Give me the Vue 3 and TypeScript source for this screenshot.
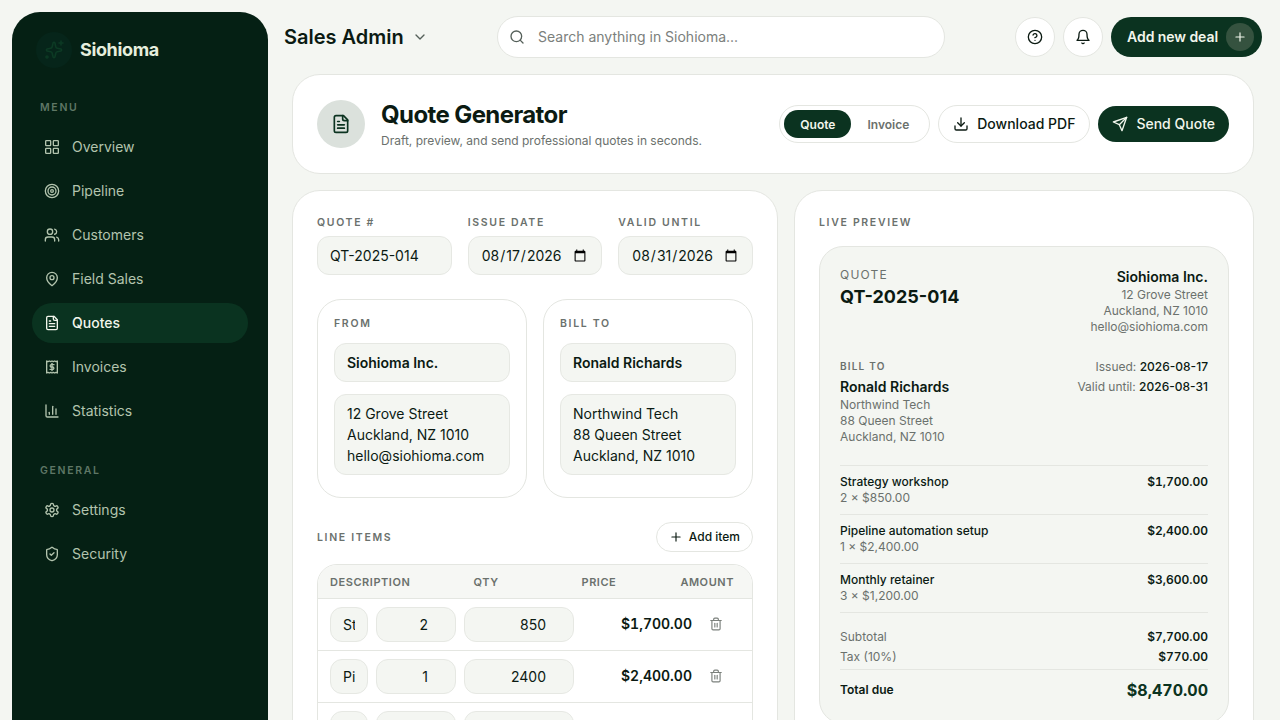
<script setup lang="ts">
import { computed, ref } from 'vue';

interface NavItem {
  label: string;
  paths: string[];
  active?: boolean;
}

interface LineItem {
  description: string;
  qty: number;
  price: number;
}

const menu: NavItem[] = [
  {
    label: 'Overview',
    paths: [
      'M3.5 2.5h5.5a1 1 0 0 1 1 1V9a1 1 0 0 1-1 1H3.5a1 1 0 0 1-1-1V3.5a1 1 0 0 1 1-1z',
      'M15 2.5h5.5a1 1 0 0 1 1 1V9a1 1 0 0 1-1 1H15a1 1 0 0 1-1-1V3.5a1 1 0 0 1 1-1z',
      'M15 14h5.5a1 1 0 0 1 1 1v5.5a1 1 0 0 1-1 1H15a1 1 0 0 1-1-1V15a1 1 0 0 1 1-1z',
      'M3.5 14h5.5a1 1 0 0 1 1 1v5.5a1 1 0 0 1-1 1H3.5a1 1 0 0 1-1-1V15a1 1 0 0 1 1-1z',
    ],
  },
  {
    label: 'Pipeline',
    paths: [
      'M2 12a10 10 0 1 0 20 0a10 10 0 1 0-20 0',
      'M6 12a6 6 0 1 0 12 0a6 6 0 1 0-12 0',
      'M10 12a2 2 0 1 0 4 0a2 2 0 1 0-4 0',
    ],
  },
  {
    label: 'Customers',
    paths: [
      'M16 21v-2a4 4 0 0 0-4-4H6a4 4 0 0 0-4 4v2',
      'M5 7a4 4 0 1 0 8 0a4 4 0 1 0-8 0',
      'M22 21v-2a4 4 0 0 0-3-3.87',
      'M16 3.13a4 4 0 0 1 0 7.75',
    ],
  },
  {
    label: 'Field Sales',
    paths: [
      'M20 10c0 6-8 12-8 12s-8-6-8-12a8 8 0 0 1 16 0Z',
      'M9 10a3 3 0 1 0 6 0a3 3 0 1 0-6 0',
    ],
  },
  {
    label: 'Quotes',
    active: true,
    paths: [
      'M15 2H6a2 2 0 0 0-2 2v16a2 2 0 0 0 2 2h12a2 2 0 0 0 2-2V7Z',
      'M14 2v4a2 2 0 0 0 2 2h4',
      'M10 9H8',
      'M16 13H8',
      'M16 17H8',
    ],
  },
  {
    label: 'Invoices',
    paths: [
      'M4 3l2 1 2-1 2 1 2-1 2 1 2-1 2 1 2-1v18l-2-1-2 1-2-1-2 1-2-1-2 1-2-1-2 1z',
      'M15 8.5h-4a1.75 1.75 0 0 0 0 3.5h2a1.75 1.75 0 0 1 0 3.5H9',
      'M12 6.5v11',
    ],
  },
  {
    label: 'Statistics',
    paths: ['M3 3v16a2 2 0 0 0 2 2h16', 'M18 17V9', 'M13 17V5', 'M8 17v-3'],
  },
];

const general: NavItem[] = [
  {
    label: 'Settings',
    paths: [
      'M12.22 2h-.44a2 2 0 0 0-2 2v.18a2 2 0 0 1-1 1.73l-.43.25a2 2 0 0 1-2 0l-.15-.08a2 2 0 0 0-2.73.73l-.22.38a2 2 0 0 0 .73 2.73l.15.1a2 2 0 0 1 1 1.72v.51a2 2 0 0 1-1 1.74l-.15.09a2 2 0 0 0-.73 2.73l.22.38a2 2 0 0 0 2.73.73l.15-.08a2 2 0 0 1 2 0l.43.25a2 2 0 0 1 1 1.73V20a2 2 0 0 0 2 2h.44a2 2 0 0 0 2-2v-.18a2 2 0 0 1 1-1.73l.43-.25a2 2 0 0 1 2 0l.15.08a2 2 0 0 0 2.73-.73l.22-.39a2 2 0 0 0-.73-2.73l-.15-.08a2 2 0 0 1-1-1.74v-.5a2 2 0 0 1 1-1.74l.15-.09a2 2 0 0 0 .73-2.73l-.22-.38a2 2 0 0 0-2.73-.73l-.15.08a2 2 0 0 1-2 0l-.43-.25a2 2 0 0 1-1-1.73V4a2 2 0 0 0-2-2z',
      'M9 12a3 3 0 1 0 6 0a3 3 0 1 0-6 0',
    ],
  },
  {
    label: 'Security',
    paths: [
      'M20 13c0 5-3.5 7.5-7.66 8.95a1 1 0 0 1-.67-.01C7.5 20.5 4 18 4 13V6a1 1 0 0 1 1-1c2 0 4.5-1.2 6.24-2.72a1.17 1.17 0 0 1 1.52 0C14.51 3.81 17 5 19 5a1 1 0 0 1 1 1z',
      'm9 12 2 2 4-4',
    ],
  },
];

const quoteNo = ref('QT-2025-014');
const issueDate = ref('2026-08-17');
const validUntil = ref('2026-08-31');
const fromName = ref('Siohioma Inc.');
const fromAddress = ref('12 Grove Street\nAuckland, NZ 1010\nhello@siohioma.com');
const billName = ref('Ronald Richards');
const billAddress = ref('Northwind Tech\n88 Queen Street\nAuckland, NZ 1010');

const items = ref<LineItem[]>([
  { description: 'Strategy workshop', qty: 2, price: 850 },
  { description: 'Pipeline automation setup', qty: 1, price: 2400 },
  { description: 'Monthly retainer', qty: 3, price: 1200 },
]);

const money = (n: number) =>
  '$' + n.toLocaleString('en-US', { minimumFractionDigits: 2, maximumFractionDigits: 2 });

const subtotal = computed(() => items.value.reduce((sum, i) => sum + i.qty * i.price, 0));
const tax = computed(() => subtotal.value * 0.1);
</script>

<template>
  <div class="app">
    <aside class="sidebar">
      <div class="brand">
        <span class="brand-logo">
          <svg viewBox="0 0 24 24" fill="none" stroke="currentColor" stroke-width="1.6" stroke-linecap="round" stroke-linejoin="round">
            <path d="M11.02 5.2a1 1 0 0 1 1.96 0l.8 3.6a2 2 0 0 0 1.5 1.5l3.5.75a1 1 0 0 1 0 1.95l-3.5.8a2 2 0 0 0-1.5 1.5l-.8 3.5a1 1 0 0 1-1.96 0l-.8-3.5a2 2 0 0 0-1.5-1.5l-3.5-.8a1 1 0 0 1 0-1.95l3.5-.75a2 2 0 0 0 1.5-1.5z" />
            <path d="M19 3v4" />
            <path d="M21 5h-4" />
            <path d="M4 19a1 1 0 1 0 2 0a1 1 0 1 0-2 0" />
          </svg>
        </span>
        <span class="brand-name">Siohioma</span>
      </div>

      <div class="nav-label">MENU</div>
      <nav class="nav">
        <a v-for="item in menu" :key="item.label" :class="['nav-item', { active: item.active }]">
          <svg viewBox="0 0 24 24" fill="none" stroke="currentColor" stroke-width="2" stroke-linecap="round" stroke-linejoin="round">
            <path v-for="d in item.paths" :key="d" :d="d" />
          </svg>
          {{ item.label }}
        </a>
      </nav>

      <div class="nav-label general">GENERAL</div>
      <nav class="nav">
        <a v-for="item in general" :key="item.label" class="nav-item">
          <svg viewBox="0 0 24 24" fill="none" stroke="currentColor" stroke-width="2" stroke-linecap="round" stroke-linejoin="round">
            <path v-for="d in item.paths" :key="d" :d="d" />
          </svg>
          {{ item.label }}
        </a>
      </nav>
    </aside>

    <div class="main">
      <header class="topbar">
        <div class="workspace">
          <span>Sales Admin</span>
          <svg viewBox="0 0 24 24" fill="none" stroke="currentColor" stroke-width="2" stroke-linecap="round" stroke-linejoin="round">
            <path d="m6 9 6 6 6-6" />
          </svg>
        </div>
        <label class="search">
          <svg viewBox="0 0 24 24" fill="none" stroke="currentColor" stroke-width="2" stroke-linecap="round" stroke-linejoin="round">
            <circle cx="11" cy="11" r="8" />
            <path d="m21 21-4.3-4.3" />
          </svg>
          <input type="text" placeholder="Search anything in Siohioma..." />
        </label>
        <div class="top-actions">
          <button class="round-btn" type="button" title="Help">
            <svg viewBox="0 0 24 24" fill="none" stroke="currentColor" stroke-width="2" stroke-linecap="round" stroke-linejoin="round">
              <circle cx="12" cy="12" r="10" />
              <path d="M9.09 9a3 3 0 0 1 5.83 1c0 2-3 3-3 3" />
              <path d="M12 17h.01" />
            </svg>
          </button>
          <button class="round-btn" type="button" title="Notifications">
            <svg viewBox="0 0 24 24" fill="none" stroke="currentColor" stroke-width="2" stroke-linecap="round" stroke-linejoin="round">
              <path d="M6 8a6 6 0 0 1 12 0c0 7 3 9 3 9H3s3-2 3-9" />
              <path d="M10.3 21a1.94 1.94 0 0 0 3.4 0" />
            </svg>
          </button>
          <button class="add-deal" type="button">
            Add new deal
            <span class="add-deal-icon">
              <svg viewBox="0 0 24 24" fill="none" stroke="currentColor" stroke-width="2" stroke-linecap="round" stroke-linejoin="round">
                <path d="M5 12h14" />
                <path d="M12 5v14" />
              </svg>
            </span>
          </button>
        </div>
      </header>

      <section class="card page-head">
        <div class="head-icon">
          <svg viewBox="0 0 24 24" fill="none" stroke="currentColor" stroke-width="2" stroke-linecap="round" stroke-linejoin="round">
            <path d="M15 2H6a2 2 0 0 0-2 2v16a2 2 0 0 0 2 2h12a2 2 0 0 0 2-2V7Z" />
            <path d="M14 2v4a2 2 0 0 0 2 2h4" />
            <path d="M10 9H8" />
            <path d="M16 13H8" />
            <path d="M16 17H8" />
          </svg>
        </div>
        <div class="head-text">
          <h1>Quote Generator</h1>
          <p>Draft, preview, and send professional quotes in seconds.</p>
        </div>
        <div class="head-actions">
          <div class="toggle">
            <span class="toggle-on">Quote</span>
            <span class="toggle-off">Invoice</span>
          </div>
          <button class="outline-btn" type="button">
            <svg viewBox="0 0 24 24" fill="none" stroke="currentColor" stroke-width="2" stroke-linecap="round" stroke-linejoin="round">
              <path d="M21 15v4a2 2 0 0 1-2 2H5a2 2 0 0 1-2-2v-4" />
              <path d="m7 10 5 5 5-5" />
              <path d="M12 15V3" />
            </svg>
            Download PDF
          </button>
          <button class="send-btn" type="button">
            <svg viewBox="0 0 24 24" fill="none" stroke="currentColor" stroke-width="2" stroke-linecap="round" stroke-linejoin="round">
              <path d="m22 2-7 20-4-9-9-4Z" />
              <path d="M22 2 11 13" />
            </svg>
            Send Quote
          </button>
        </div>
      </section>

      <div class="columns">
        <section class="card form-panel">
          <div class="meta-grid">
            <label class="field">
              <span class="caps">QUOTE #</span>
              <input v-model="quoteNo" type="text" class="input" />
            </label>
            <label class="field">
              <span class="caps">ISSUE DATE</span>
              <input v-model="issueDate" type="date" class="input" />
            </label>
            <label class="field">
              <span class="caps">VALID UNTIL</span>
              <input v-model="validUntil" type="date" class="input" />
            </label>
          </div>

          <div class="party-grid">
            <div class="party">
              <span class="caps">FROM</span>
              <input v-model="fromName" type="text" class="input strong" />
              <textarea v-model="fromAddress" rows="3" class="input area"></textarea>
            </div>
            <div class="party">
              <span class="caps">BILL TO</span>
              <input v-model="billName" type="text" class="input strong" />
              <textarea v-model="billAddress" rows="3" class="input area"></textarea>
            </div>
          </div>

          <div class="items-head">
            <span class="caps">LINE ITEMS</span>
            <button class="add-item" type="button">
              <svg viewBox="0 0 24 24" fill="none" stroke="currentColor" stroke-width="2" stroke-linecap="round" stroke-linejoin="round">
                <path d="M5 12h14" />
                <path d="M12 5v14" />
              </svg>
              Add item
            </button>
          </div>

          <div class="items-table">
            <div class="table-head">
              <span>DESCRIPTION</span>
              <span>QTY</span>
              <span>PRICE</span>
              <span class="right">AMOUNT</span>
            </div>
            <div v-for="(item, index) in items" :key="index" class="table-row">
              <input v-model="item.description" type="text" class="input cell" />
              <input v-model.number="item.qty" type="number" class="input cell num" />
              <input v-model.number="item.price" type="number" class="input cell num" />
              <span class="amount">{{ money(item.qty * item.price) }}</span>
              <svg class="trash" viewBox="0 0 24 24" fill="none" stroke="currentColor" stroke-width="2" stroke-linecap="round" stroke-linejoin="round">
                <path d="M3 6h18" />
                <path d="M19 6v14c0 1-1 2-2 2H7c-1 0-2-1-2-2V6" />
                <path d="M8 6V4c0-1 1-2 2-2h4c1 0 2 1 2 2v2" />
                <path d="M10 11v6" />
                <path d="M14 11v6" />
              </svg>
            </div>
          </div>
        </section>

        <section class="card preview-panel">
          <span class="caps">LIVE PREVIEW</span>
          <div class="sheet">
            <div class="sheet-top">
              <div>
                <div class="sheet-kicker">QUOTE</div>
                <div class="sheet-no">{{ quoteNo }}</div>
              </div>
              <div class="text-right">
                <div class="sheet-name">{{ fromName }}</div>
                <div v-for="line in fromAddress.split('\n')" :key="line" class="sheet-muted">{{ line }}</div>
              </div>
            </div>

            <div class="sheet-bill">
              <div>
                <div class="sheet-caps">BILL TO</div>
                <div class="sheet-name">{{ billName }}</div>
                <div v-for="line in billAddress.split('\n')" :key="line" class="sheet-muted">{{ line }}</div>
              </div>
              <div class="sheet-dates">
                <div>Issued: <b>{{ issueDate }}</b></div>
                <div>Valid until: <b>{{ validUntil }}</b></div>
              </div>
            </div>

            <div class="sheet-items">
              <div v-for="item in items" :key="item.description" class="sheet-item">
                <div>
                  <div class="item-name">{{ item.description }}</div>
                  <div class="sheet-muted">{{ item.qty }} × {{ money(item.price) }}</div>
                </div>
                <div class="item-total">{{ money(item.qty * item.price) }}</div>
              </div>
            </div>

            <div class="sheet-sums">
              <div class="sum-row"><span>Subtotal</span><b>{{ money(subtotal) }}</b></div>
              <div class="sum-row"><span>Tax (10%)</span><b>{{ money(tax) }}</b></div>
            </div>
            <div class="sheet-total">
              <span>Total due</span>
              <strong>{{ money(subtotal + tax) }}</strong>
            </div>
          </div>
        </section>
      </div>
    </div>
  </div>
</template>

<style>
html,
body {
  margin: 0;
  background: #f4f6f2;
}
</style>

<style scoped>
.app {
  display: flex;
  height: 720px;
  overflow: hidden;
  background: #f4f6f2;
  color: #0b1a12;
  font-family: Inter, "Liberation Sans", sans-serif;
}

.sidebar {
  flex: none;
  box-sizing: border-box;
  width: 256px;
  height: 760px;
  margin: 12px 0 0 12px;
  padding: 20px;
  border-radius: 28px;
  background: #052014;
}

.brand {
  display: flex;
  align-items: center;
  gap: 8px;
  margin-bottom: 32px;
  padding-left: 4px;
}

.brand-logo {
  display: flex;
  align-items: center;
  justify-content: center;
  width: 36px;
  height: 36px;
  border-radius: 50%;
  background: #06251a;
  color: #0c3a24;
}

.brand-logo svg {
  width: 24px;
  height: 24px;
}

.brand-name {
  font-size: 18px;
  line-height: 28px;
  font-weight: 700;
  letter-spacing: -0.02em;
  color: #e6eedd;
}

.nav-label {
  height: 14px;
  margin-bottom: 13px;
  padding-left: 8px;
  font-size: 10.5px;
  line-height: 16px;
  font-weight: 600;
  letter-spacing: 0.16em;
  color: #5f7766;
}

.nav-label.general {
  margin-top: 32px;
}

.nav {
  display: flex;
  flex-direction: column;
  gap: 4px;
}

.nav-item {
  display: flex;
  align-items: center;
  gap: 12px;
  height: 40px;
  padding-left: 12px;
  border-radius: 20px;
  font-size: 14px;
  line-height: 20px;
  font-weight: 400;
  color: #b3c4ae;
}

.nav-item svg {
  flex: none;
  width: 16px;
  height: 16px;
}

.nav-item.active {
  background: #0a3320;
  color: #f2f6ec;
  font-weight: 500;
}

.main {
  flex: 1;
  min-width: 0;
  margin: 0 18px 0 16px;
}

.topbar {
  display: flex;
  align-items: center;
  justify-content: space-between;
  height: 42px;
  margin: 16px 0;
}

.workspace {
  display: flex;
  align-items: center;
  gap: 8px;
  width: 143px;
  font-size: 20px;
  line-height: 28px;
  font-weight: 600;
  white-space: nowrap;
}

.workspace svg {
  flex: none;
  width: 16px;
  height: 16px;
  color: #55605a;
}

.search {
  display: flex;
  align-items: center;
  gap: 13px;
  box-sizing: border-box;
  width: 448px;
  height: 42px;
  padding: 0 16px 0 11px;
  border: 1px solid #e4e6e1;
  border-radius: 21px;
  background: #fff;
}

.search svg {
  flex: none;
  width: 16px;
  height: 16px;
  color: #55605a;
}

.search input {
  flex: 1;
  min-width: 0;
  height: 20px;
  margin-bottom: 1px;
  border: 0;
  outline: 0;
  padding: 0;
  background: transparent;
  font: inherit;
  font-size: 14px;
  line-height: 20px;
}

.search input::placeholder {
  color: #7b807c;
}

.top-actions {
  display: flex;
  align-items: center;
  gap: 8px;
}

.round-btn {
  display: flex;
  align-items: center;
  justify-content: center;
  width: 40px;
  height: 40px;
  padding: 0;
  border: 1px solid #e4e6e1;
  border-radius: 50%;
  background: #fff;
  color: #0b1a12;
}

.round-btn svg {
  width: 16px;
  height: 16px;
}

.add-deal {
  display: flex;
  align-items: center;
  gap: 8px;
  height: 40px;
  padding: 0 8px 0 16px;
  border: 0;
  border-radius: 20px;
  background: #0b3320;
  color: #f2f6ec;
  font: inherit;
  font-size: 14px;
  line-height: 20px;
  font-weight: 600;
  letter-spacing: -0.005em;
}

.add-deal-icon {
  display: flex;
  align-items: center;
  justify-content: center;
  width: 28px;
  height: 28px;
  border-radius: 50%;
  background: #35523f;
}

.add-deal-icon svg {
  width: 14px;
  height: 14px;
}

.card {
  box-sizing: border-box;
  border: 1px solid #e4e6e1;
  border-radius: 28px;
  background: #fff;
}

.page-head {
  display: flex;
  align-items: center;
  gap: 16px;
  height: 100px;
  margin: 0 8px 16px;
  padding: 0 24px;
}

.head-icon {
  display: flex;
  align-items: center;
  justify-content: center;
  flex: none;
  width: 48px;
  height: 48px;
  border-radius: 50%;
  background: #dbe1dc;
  color: #0b3320;
}

.head-icon svg {
  width: 20px;
  height: 20px;
}

.head-text {
  flex: 1;
  min-width: 0;
}

.head-text h1 {
  margin: 0;
  font-size: 24px;
  line-height: 32px;
  font-weight: 700;
  letter-spacing: -0.025em;
}

.head-text p {
  margin: 2px 0 0;
  font-size: 12px;
  line-height: 16px;
  color: #6b716d;
}

.head-actions {
  display: flex;
  align-items: center;
  gap: 8px;
}

.toggle {
  display: flex;
  align-items: center;
  gap: 0;
  box-sizing: border-box;
  height: 38px;
  padding: 0 4px;
  border: 1px solid #e4e6e1;
  border-radius: 19px;
  font-size: 12px;
  font-weight: 600;
}

.toggle-on {
  display: flex;
  align-items: center;
  height: 28px;
  padding: 0 16px;
  border-radius: 14px;
  background: #0b3320;
  color: #f2f6ec;
}

.toggle-off {
  padding: 0 16px;
  color: #6b716d;
}

.outline-btn,
.send-btn {
  display: flex;
  align-items: center;
  gap: 8px;
  border-radius: 19px;
  font: inherit;
  font-size: 14px;
  line-height: 20px;
  font-weight: 500;
}

.outline-btn {
  box-sizing: border-box;
  height: 38px;
  padding: 0 14px;
  border: 1px solid #e4e6e1;
  background: #fff;
  color: #0b1a12;
}

.send-btn {
  box-sizing: border-box;
  height: 36px;
  padding: 0 14px;
  border: 0;
  background: #0b3320;
  color: #f2f6ec;
}

.outline-btn svg,
.send-btn svg {
  width: 16px;
  height: 16px;
}

.columns {
  display: flex;
  align-items: flex-start;
  gap: 16px;
  margin: 0 8px;
}

.form-panel {
  flex: none;
  width: 486px;
  padding: 24px;
}

.preview-panel {
  flex: 1;
  min-width: 0;
  padding: 24px;
}

.caps {
  display: block;
  font-size: 10.5px;
  line-height: 15px;
  font-weight: 600;
  letter-spacing: 0.16em;
  color: #6b716d;
}

.meta-grid {
  display: grid;
  grid-template-columns: repeat(3, 1fr);
  gap: 16px;
}

.field {
  display: flex;
  flex-direction: column;
  gap: 6px;
  min-width: 0;
}

.input {
  box-sizing: border-box;
  width: 100%;
  min-width: 0;
  height: 39px;
  padding: 0 12px;
  border: 1px solid #e6e8e3;
  border-radius: 12px;
  outline: 0;
  background: #f4f6f2;
  color: #0b1a12;
  font: inherit;
  font-size: 14px;
}

.input.strong {
  font-weight: 600;
}

.input.area {
  display: block;
  height: 81px;
  padding: 8px 12px;
  line-height: 21px;
  resize: none;
}

.party-grid {
  display: grid;
  grid-template-columns: 1fr 1fr;
  gap: 16px;
  margin-top: 24px;
}

.party {
  display: flex;
  flex-direction: column;
  gap: 12px;
  box-sizing: border-box;
  height: 199px;
  padding: 16px;
  border: 1px solid #e4e6e1;
  border-radius: 24px;
}

.items-head {
  display: flex;
  align-items: center;
  justify-content: space-between;
  margin-top: 24px;
}

.add-item {
  display: flex;
  align-items: center;
  gap: 6px;
  height: 30px;
  padding: 0 12px;
  border: 1px solid #e4e6e1;
  border-radius: 15px;
  background: #fff;
  color: #0b1a12;
  font: inherit;
  font-size: 12px;
  line-height: 16px;
  font-weight: 500;
}

.add-item svg {
  width: 14px;
  height: 14px;
}

.items-table {
  margin-top: 12px;
  border: 1px solid #e4e6e1;
  border-radius: 20px;
  overflow: hidden;
}

.table-head {
  display: grid;
  grid-template-columns: 143.5px 108px 1fr auto;
  align-items: center;
  height: 33px;
  padding: 0 18px 0 12px;
  background: #f6f7f4;
  font-size: 11px;
  font-weight: 600;
  letter-spacing: 0.05em;
  color: #6b716d;
}

.right {
  text-align: right;
}

.table-row {
  display: grid;
  grid-template-columns: 38px 80px 110px 1fr 32px;
  align-items: center;
  gap: 8px;
  height: 51px;
  padding: 0 12px;
  border-top: 1px solid #e4e6e1;
}

.input.cell {
  height: 35px;
}

.input.num {
  text-align: right;
}

.amount {
  margin-bottom: 2px;
  padding-right: 8px;
  text-align: right;
  font-size: 14px;
  font-weight: 600;
  font-variant-numeric: tabular-nums;
}

.trash {
  width: 14px;
  height: 14px;
  margin: 0 0 2px 1px;
  color: #7b807c;
}

.sheet {
  margin-top: 16px;
  padding: 20px;
  border: 1px solid #e4e6e1;
  border-radius: 24px;
  background: #f4f6f2;
}

.sheet-top,
.sheet-bill {
  display: flex;
  justify-content: space-between;
}

.text-right {
  text-align: right;
}

.sheet-kicker {
  font-size: 12px;
  line-height: 16px;
  letter-spacing: 0.1em;
  color: #6b716d;
}

.sheet-no {
  font-size: 18px;
  line-height: 28px;
  font-weight: 700;
}

.sheet-name {
  font-size: 14px;
  line-height: 20px;
  font-weight: 600;
}

.sheet-muted {
  font-size: 12px;
  line-height: 16px;
  color: #6b716d;
}

.sheet-bill {
  margin-top: 24px;
}

.sheet-caps {
  margin-bottom: 4px;
  font-size: 10px;
  line-height: 14px;
  font-weight: 600;
  letter-spacing: 0.12em;
  color: #6b716d;
}

.sheet-dates {
  text-align: right;
  font-size: 12px;
  line-height: 16px;
  color: #6b716d;
}

.sheet-dates div {
  margin-bottom: 4px;
}

.sheet-dates b {
  font-weight: 500;
  color: #0b1a12;
}

.sheet-items {
  margin-top: 20px;
  border-top: 1px solid #e4e6e1;
}

.sheet-item {
  display: flex;
  justify-content: space-between;
  padding: 8px 0;
  border-bottom: 1px solid #e4e6e1;
}

.item-name {
  font-size: 12px;
  line-height: 16px;
  font-weight: 500;
}

.item-total {
  font-size: 12px;
  line-height: 16px;
  font-weight: 600;
  font-variant-numeric: tabular-nums;
}

.sheet-sums {
  margin-top: 14px;
  padding-bottom: 2px;
  border-bottom: 1px solid #e4e6e1;
}

.sum-row {
  display: flex;
  justify-content: space-between;
  font-size: 12px;
  line-height: 20px;
  color: #6b716d;
}

.sum-row b {
  font-weight: 600;
  color: #0b1a12;
  font-variant-numeric: tabular-nums;
}

.sheet-total {
  display: flex;
  align-items: center;
  justify-content: space-between;
  margin-top: 7px;
  font-size: 12px;
  font-weight: 600;
}

.sheet-total span {
  margin-bottom: 2px;
}

.sheet-total strong {
  font-size: 16px;
  line-height: 26px;
  font-weight: 700;
  color: #0b3320;
  font-variant-numeric: tabular-nums;
}
</style>
